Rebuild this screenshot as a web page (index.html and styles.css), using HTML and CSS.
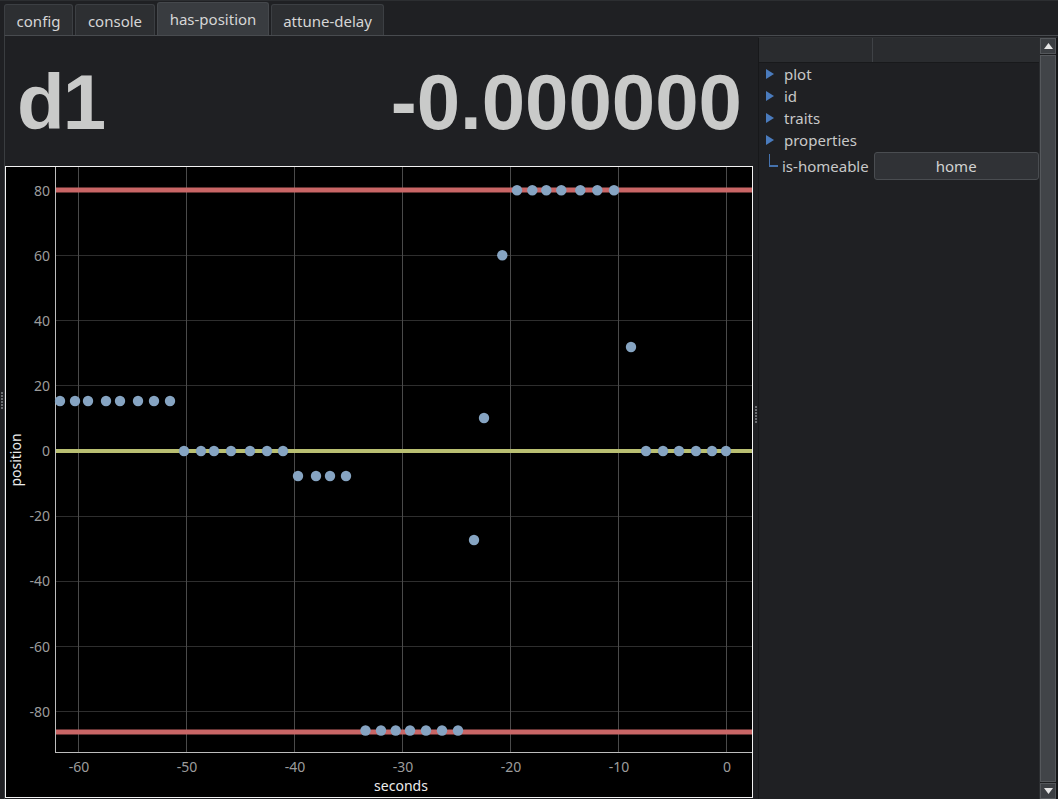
FILE: index.html
```html
<!DOCTYPE html>
<html>
<head>
<meta charset="utf-8">
<link rel="stylesheet" href="styles.css">
</head>
<body>
<div class="app">
  <div class="edge-grip"><div class="grip"><i></i><i></i><i></i><i></i><i></i><i></i></div></div>
  <div class="main">
    <div class="tabbar">
      <div class="tab t-config">config</div>
      <div class="tab t-console">console</div>
      <div class="tab active t-pos">has-position</div>
      <div class="tab t-attune">attune-delay</div>
    </div>
    <div class="pane">
      <div class="left">
        <div class="display">
          <span class="big name">d1</span>
          <span class="big">-0.000000</span>
        </div>
        <div class="plot">
          <svg width="748" height="632" viewBox="0 0 748 632" xmlns="http://www.w3.org/2000/svg">
            <rect x="0.5" y="0.5" width="747" height="631" fill="#000" stroke="#f2f2f2" stroke-width="1"/>
            <g stroke="#2e2e2e" stroke-width="1">
              <line x1="50" y1="24.5" x2="747" y2="24.5"/>
              <line x1="50" y1="89.5" x2="747" y2="89.5"/>
              <line x1="50" y1="154.5" x2="747" y2="154.5"/>
              <line x1="50" y1="219.5" x2="747" y2="219.5"/>
              <line x1="50" y1="285.5" x2="747" y2="285.5"/>
              <line x1="50" y1="350.5" x2="747" y2="350.5"/>
              <line x1="50" y1="415.5" x2="747" y2="415.5"/>
              <line x1="50" y1="480.5" x2="747" y2="480.5"/>
              <line x1="50" y1="545.5" x2="747" y2="545.5"/>
            </g>
            <g stroke="#4a4a4a" stroke-width="1">
              <line x1="73.5" y1="1" x2="73.5" y2="586"/>
              <line x1="181.5" y1="1" x2="181.5" y2="586"/>
              <line x1="289.5" y1="1" x2="289.5" y2="586"/>
              <line x1="397.5" y1="1" x2="397.5" y2="586"/>
              <line x1="505.5" y1="1" x2="505.5" y2="586"/>
              <line x1="613.5" y1="1" x2="613.5" y2="586"/>
              <line x1="721.5" y1="1" x2="721.5" y2="586"/>
            </g>
            <line x1="50.5" y1="1" x2="50.5" y2="586" stroke="#bdbdbd" stroke-width="1"/>
            <line x1="50" y1="586.5" x2="747" y2="586.5" stroke="#bdbdbd" stroke-width="1"/>
            <line x1="51" y1="24" x2="747" y2="24" stroke="#c96666" stroke-width="5"/>
            <line x1="51" y1="566" x2="747" y2="566" stroke="#c96666" stroke-width="5"/>
            <line x1="51" y1="285" x2="747" y2="285" stroke="#b9bf72" stroke-width="4"/>
            <g fill="#86a4c2">
              <circle cx="55" cy="235" r="5.2"/><circle cx="70" cy="235" r="5.2"/><circle cx="83" cy="235" r="5.2"/><circle cx="101" cy="235" r="5.2"/><circle cx="115" cy="235" r="5.2"/><circle cx="133" cy="235" r="5.2"/><circle cx="149" cy="235" r="5.2"/><circle cx="165" cy="235" r="5.2"/>
              <circle cx="179" cy="285" r="5.2"/><circle cx="196" cy="285" r="5.2"/><circle cx="209" cy="285" r="5.2"/><circle cx="226" cy="285" r="5.2"/><circle cx="245" cy="285" r="5.2"/><circle cx="262" cy="285" r="5.2"/><circle cx="278" cy="285" r="5.2"/>
              <circle cx="293" cy="310" r="5.2"/><circle cx="311" cy="310" r="5.2"/><circle cx="325" cy="310" r="5.2"/><circle cx="341" cy="310" r="5.2"/>
              <circle cx="360.5" cy="564.5" r="5.2"/><circle cx="376" cy="564.5" r="5.2"/><circle cx="390.7" cy="564.5" r="5.2"/><circle cx="405" cy="564.5" r="5.2"/><circle cx="421" cy="564.5" r="5.2"/><circle cx="437" cy="564.5" r="5.2"/><circle cx="453" cy="564.5" r="5.2"/>
              <circle cx="469" cy="374" r="5.2"/>
              <circle cx="479" cy="252" r="5.2"/>
              <circle cx="497.3" cy="89.3" r="5.2"/>
              <circle cx="512" cy="24.3" r="5.2"/><circle cx="527.3" cy="24.3" r="5.2"/><circle cx="541.3" cy="24.3" r="5.2"/><circle cx="556.3" cy="24.3" r="5.2"/><circle cx="575.3" cy="24.3" r="5.2"/><circle cx="592.3" cy="24.3" r="5.2"/><circle cx="609" cy="24.3" r="5.2"/>
              <circle cx="626" cy="181" r="5.2"/>
              <circle cx="641" cy="285" r="5.2"/><circle cx="658" cy="285" r="5.2"/><circle cx="674" cy="285" r="5.2"/><circle cx="691" cy="285" r="5.2"/><circle cx="707" cy="285" r="5.2"/><circle cx="721" cy="285" r="5.2"/>
            </g>
            <g class="tick" text-anchor="end">
              <text x="45" y="30">80</text>
              <text x="45" y="95">60</text>
              <text x="45" y="160">40</text>
              <text x="45" y="225">20</text>
              <text x="45" y="290">0</text>
              <text x="45" y="355">-20</text>
              <text x="45" y="420">-40</text>
              <text x="45" y="486">-60</text>
              <text x="45" y="551">-80</text>
            </g>
            <g class="tick" text-anchor="middle">
              <text x="74" y="606">-60</text>
              <text x="182" y="606">-50</text>
              <text x="290" y="606">-40</text>
              <text x="398" y="606">-30</text>
              <text x="506" y="606">-20</text>
              <text x="614" y="606">-10</text>
              <text x="722" y="606">0</text>
            </g>
            <text class="axis-title" x="396" y="625" text-anchor="middle">seconds</text>
            <text class="axis-title" x="0" y="0" text-anchor="middle" transform="translate(16 294) rotate(-90)">position</text>
          </svg>
        </div>
      </div>
      <div class="splitter"><div class="grip"><i></i><i></i><i></i><i></i><i></i><i></i></div></div>
      <div class="right">
        <div class="tree">
          <div class="tree-header">
            <div class="hcol first"></div>
            <div class="hcol"></div>
          </div>
          <div class="row"><span class="arrow"></span><span class="label">plot</span></div>
          <div class="row"><span class="arrow"></span><span class="label">id</span></div>
          <div class="row"><span class="arrow"></span><span class="label">traits</span></div>
          <div class="row"><span class="arrow"></span><span class="label">properties</span></div>
          <div class="row leaf"><span class="branch"></span><span class="label">is-homeable</span><button class="btn">home</button></div>
        </div>
        <div class="scrollbar">
          <div class="sb-btn"><svg width="9" height="6" viewBox="0 0 9 6"><path d="M4.5 0 L9 6 L0 6 Z" fill="#e6e6e6"/></svg></div>
          <div class="sb-track"></div>
          <div class="sb-btn"><svg width="9" height="6" viewBox="0 0 9 6"><path d="M0 0 L9 0 L4.5 6 Z" fill="#e6e6e6"/></svg></div>
        </div>
      </div>
    </div>
  </div>
</div>
</body>
</html>
```

FILE: styles.css
```css
html, body {
  margin: 0;
  padding: 0;
  background: #1f2023;
  overflow: hidden;
}
body {
  width: 1058px;
  height: 799px;
  font-family: "Noto Sans", sans-serif;
  color: #cfcfcf;
}
.app {
  display: flex;
  width: 1058px;
  height: 799px;
  border-top: 1px solid #2c2e31;
  box-sizing: border-box;
}
.edge-grip {
  width: 4px;
  display: flex;
  align-items: center;
  justify-content: flex-start;
  padding-left: 1px;
  box-sizing: border-box;
}
.grip {
  display: flex;
  flex-direction: column;
  gap: 1px;
}
.grip i {
  display: block;
  width: 2px;
  height: 2px;
  background: #6a6c70;
}
.main {
  flex: 1;
  display: flex;
  flex-direction: column;
  min-width: 0;
}
.tabbar {
  height: 34px;
  display: flex;
  align-items: flex-end;
  gap: 2px;
}
.tab {
  height: 31px;
  box-sizing: border-box;
  background: #2d2f32;
  border: 1px solid #3c3f43;
  border-bottom: none;
  border-radius: 3px 3px 0 0;
  font-size: 15px;
  color: #d6d6d6;
  display: flex;
  align-items: center;
  justify-content: center;
  padding-top: 2px;
}
.tab.active {
  height: 33px;
  background: #393c40;
  border-color: #45484c;
  padding-top: 0;
}
.t-config { width: 69px; }
.t-console { width: 80px; }
.t-pos { width: 112px; }
.t-attune { width: 113px; }
.pane {
  flex: 1;
  display: flex;
  border-top: 1px solid #484b4f;
  border-left: 1px solid #3a3d40;
  min-height: 0;
}
.left {
  width: 748px;
  display: flex;
  flex-direction: column;
}
.display {
  height: 130px;
  display: flex;
  justify-content: space-between;
  align-items: center;
  padding: 0 11px 0 12px;
}
.big {
  font-family: "Liberation Sans", Arial, sans-serif;
  font-weight: bold;
  font-size: 78px;
  color: #c9cac9;
  line-height: 1;
  padding-top: 1px;
}
.name {
  letter-spacing: -2px;
}
.plot {
  height: 632px;
}
.plot svg {
  display: block;
}
.tick {
  font-family: "Noto Sans", sans-serif;
  font-size: 14px;
  fill: #9c9c9c;
}
.axis-title {
  font-family: "Noto Sans", sans-serif;
  font-size: 14px;
  fill: #ececec;
}
.splitter {
  width: 5px;
  display: flex;
  align-items: center;
  justify-content: center;
  padding-bottom: 6px;
  box-sizing: border-box;
}
.right {
  flex: 1;
  display: flex;
  border-top: 1px solid #2e3033;
  border-left: 1px solid #17181a;
  border-right: 2px solid #151618;
  margin-top: 1px;
  min-width: 0;
}
.tree {
  flex: 1;
  display: flex;
  flex-direction: column;
  min-width: 0;
}
.tree-header {
  height: 25px;
  display: flex;
  background: #2a2c2f;
  border-bottom: 1px solid #18191b;
  box-sizing: border-box;
}
.hcol {
  flex: 1;
}
.hcol.first {
  flex: none;
  width: 113px;
  border-right: 1px solid #3f4246;
}
.row {
  height: 22px;
  display: flex;
  align-items: center;
  font-size: 15px;
  color: #c8c8c8;
}
.row .label {
  padding-left: 10px;
}
.arrow {
  width: 0;
  height: 0;
  margin-left: 7px;
  border-top: 5px solid transparent;
  border-bottom: 5px solid transparent;
  border-left: 8px solid #4a7bbd;
}
.row.leaf {
  height: 30px;
}
.branch {
  width: 9px;
  height: 13px;
  margin-left: 10px;
  margin-top: -12px;
  border-left: 1px solid #4a7bbd;
  border-bottom: 2px solid #4a7bbd;
  box-sizing: border-box;
  opacity: 0.9;
}
.row.leaf .label {
  padding-left: 4px;
}
.btn {
  margin-left: 5px;
  width: 165px;
  height: 28px;
  background: #303236;
  border: 1px solid #4a4d51;
  border-radius: 3px;
  color: #d2d2d2;
  font-family: "Noto Sans", sans-serif;
  font-size: 15px;
  padding: 0;
}
.scrollbar {
  width: 16px;
  display: flex;
  flex-direction: column;
  background: #1d1e20;
  border-left: 1px solid #2b2d30;
}
.sb-btn {
  height: 16px;
  display: flex;
  align-items: center;
  justify-content: center;
  background: #3c3f43;
  border: 1px solid #54575b;
  box-sizing: border-box;
}
.sb-track {
  flex: 1;
  background: #414448;
  border: 1px solid #55585c;
  box-sizing: border-box;
  margin: 1px 0;
}
```
